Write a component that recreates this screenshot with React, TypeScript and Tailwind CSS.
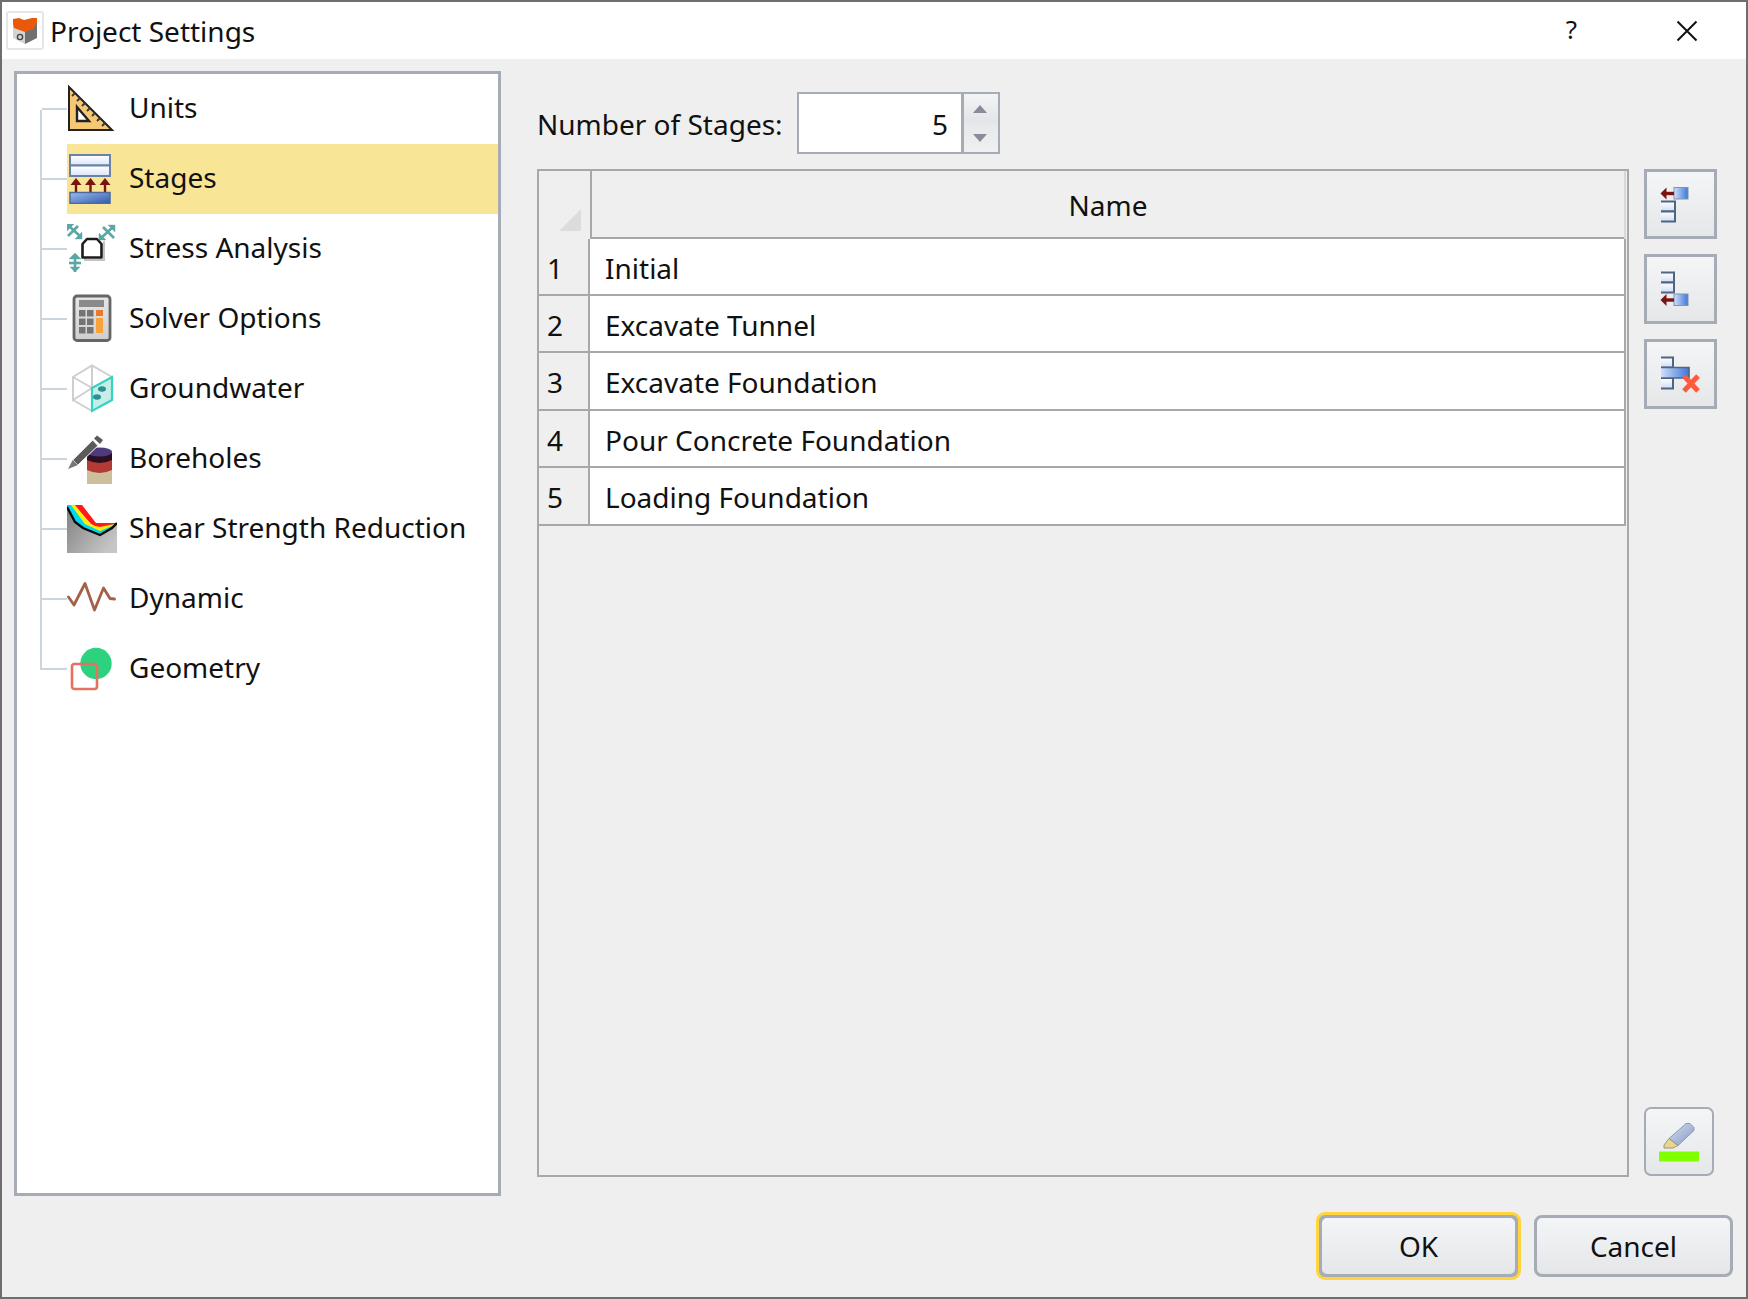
import React from 'react';

const rowClass = 'relative flex items-center';

// Tree icons: every one is drawn in a 50x50 box
function UnitsIcon() {
  const ticks = [9, 14, 19, 24, 29, 34, 39];
  return (
    <svg width="50" height="50" viewBox="0 0 50 50">
      <path d="M2 3 L45 46 H2 Z" fill="#f6c873" stroke="#222" strokeWidth="2" strokeLinejoin="miter" />
      <path d="M10 23 L22 37 H10 Z" fill="#fff" stroke="#222" strokeWidth="2.4" />
      {ticks.map((t) => (
        <line key={t} x1={t - 1} y1={t} x2={t - 4} y2={t + 3} stroke="#3a3a3a" strokeWidth="2" />
      ))}
    </svg>
  );
}

function StagesIcon() {
  return (
    <svg width="50" height="50" viewBox="0 0 50 50">
      <defs>
        <linearGradient id="stageRow" x1="0" y1="0" x2="0" y2="1">
          <stop offset="0" stopColor="#ffffff" />
          <stop offset="1" stopColor="#dbe5f8" />
        </linearGradient>
        <linearGradient id="stageBar" x1="0" y1="0" x2="1" y2="1">
          <stop offset="0" stopColor="#9dbcf0" />
          <stop offset="1" stopColor="#3059aa" />
        </linearGradient>
      </defs>
      <rect x="3" y="1" width="40" height="10.5" fill="url(#stageRow)" stroke="#6a83a5" strokeWidth="2" />
      <rect x="3" y="11.5" width="40" height="10.5" fill="url(#stageRow)" stroke="#6a83a5" strokeWidth="2" />
      {[9, 23.5, 38].map((x) => (
        <g key={x}>
          <line x1={x} y1="29" x2={x} y2="38" stroke="#7a1414" strokeWidth="2.4" />
          <path d={`M${x - 5.5} 31 L${x} 24 L${x + 5.5} 31 Z`} fill="#7a1414" />
        </g>
      ))}
      <rect x="3" y="38.5" width="40" height="11" fill="url(#stageBar)" stroke="#4b6a9c" strokeWidth="1.5" />
    </svg>
  );
}

function StressIcon() {
  const teal = '#5aa8a4';
  return (
    <svg width="50" height="50" viewBox="0 0 50 50">
      <path d="M18 17 V36 H37 V17" fill="none" stroke="#c4c4c4" strokeWidth="2" />
      <path d="M15.5 20 L20 15 H30 L34.5 20 V33.5 H15.5 Z" fill="#fff" stroke="#1c1c1c" strokeWidth="2.6" strokeLinejoin="round" />
      <g stroke={teal} strokeWidth="2.6" fill={teal}>
        <line x1="2" y1="2" x2="14" y2="13" />
        <line x1="1" y1="12" x2="11" y2="2" />
        <path d="M0 0 H7 L0 7 Z" strokeWidth="0.4" />
        <path d="M15 15 H8 L15 8 Z" strokeWidth="0.4" />
        <line x1="33" y1="15" x2="46" y2="3" />
        <line x1="36" y1="3" x2="47" y2="14" />
        <path d="M48 1 V8 L41 1 Z" strokeWidth="0.4" />
        <path d="M32 16 V9 L39 16 Z" strokeWidth="0.4" />
        <line x1="8" y1="30" x2="8" y2="48" />
        <line x1="2" y1="39" x2="14" y2="39" />
        <path d="M2 35 L8 29 L14 35 Z" strokeWidth="0.4" />
        <path d="M3 43 H13 L8 48 Z" strokeWidth="0.4" />
      </g>
    </svg>
  );
}

function SolverIcon() {
  const rows = [16, 24.5, 33];
  return (
    <svg width="50" height="50" viewBox="0 0 50 50">
      <defs>
        <linearGradient id="calcBody" x1="0" y1="0" x2="0" y2="1">
          <stop offset="0" stopColor="#e6e6e6" />
          <stop offset="1" stopColor="#cfcfcf" />
        </linearGradient>
      </defs>
      <rect x="7" y="2" width="36" height="44.5" rx="3" fill="url(#calcBody)" stroke="#666" strokeWidth="2.8" />
      <rect x="12" y="6" width="25" height="7" fill="#8a8a8a" />
      {rows.map((y) => (
        <g key={y} fill="#747474">
          <rect x="12" y={y} width="6.5" height="6.5" />
          <rect x="20" y={y} width="6.5" height="6.5" />
        </g>
      ))}
      <rect x="29" y="16" width="7" height="6" fill="#e9792c" />
      <rect x="29" y="24" width="7" height="15" fill="#f7a23a" />
    </svg>
  );
}

function GroundwaterIcon() {
  return (
    <svg width="50" height="50" viewBox="0 0 50 50">
      <g fill="none" stroke="#cfcfcf" strokeWidth="2">
        <path d="M25 24 L6 36 V13 L25 1.5 L45 13" />
        <path d="M6 13 L25 24 M25 1.5 V24 M6 36 L25 47" />
      </g>
      <path d="M25 24 L45 13 V36 L25 47 Z" fill="#c6eee8" stroke="#35d3c2" strokeWidth="2.2" />
      <ellipse cx="35" cy="25" rx="4" ry="2.8" fill="#2f8f93" />
      <ellipse cx="30" cy="33" rx="4" ry="2.8" fill="#2f8f93" />
    </svg>
  );
}

function BoreholesIcon() {
  return (
    <svg width="50" height="50" viewBox="0 0 50 50">
      <path d="M20 36 H45 V50 H20 Z" fill="#cdbf9c" />
      <path d="M20 25 H45 V36 Q32.5 42 20 36 Z" fill="#b43a35" />
      <path d="M20 19 H45 V26 Q32.5 32 20 26 Z" fill="#2c1020" />
      <ellipse cx="32.5" cy="18" rx="12.5" ry="4.5" fill="#4d3b7c" />
      <path d="M5.7 26 L25.7 6 L31 11.7 L11 31 Z" fill="#5b5b5b" stroke="#fff" strokeWidth="1" />
      <path d="M5.7 26 L11 31 L1 35 Z" fill="#777" />
      <path d="M27 4.5 L30 1.5 L36 6 L33 10 Z" fill="#5b5b5b" />
    </svg>
  );
}

function ShearIcon() {
  return (
    <svg width="50" height="50" viewBox="0 0 50 50">
      <defs>
        <linearGradient id="shearRock" x1="0" y1="0" x2="1" y2="0.7">
          <stop offset="0" stopColor="#7f7f7f" />
          <stop offset="1" stopColor="#c6c6c6" />
        </linearGradient>
      </defs>
      <path d="M0 3 L8 18 L16 24 L33 31 L45 24 L50 19 V49 H0 Z" fill="url(#shearRock)" />
      <path d="M7 1 H15 L29 19 H50 L45 24 L33 25 L24 20 Z" fill="#ff1a1a" />
      <path d="M3 1 H8 L24 21 L33 23 L50 19.5 L45 25 L33 28 L18 20 Z" fill="#ffee00" />
      <path d="M0 1 H4 L18 20 L33 27 L47 21 L45 24 L33 31 L16 24 L8 18 L0 3 Z" fill="#00d8ee" />
      <path d="M0 3 L8 18 L16 24 L33 31 L45 24 L50 19" fill="none" stroke="#0a0a0a" strokeWidth="2.4" />
    </svg>
  );
}

function DynamicIcon() {
  return (
    <svg width="50" height="50" viewBox="0 0 50 50">
      <path d="M1.5 23 L7 31 L18 9.5 L27.5 36 L36.5 14 L43 24.5 L47.5 25" fill="none" stroke="#a5604a" strokeWidth="2.8" strokeLinejoin="round" strokeLinecap="round" />
    </svg>
  );
}

function GeometryIcon() {
  return (
    <svg width="50" height="50" viewBox="0 0 50 50">
      <circle cx="29" cy="19.5" r="15.7" fill="#2dd27e" />
      <rect x="5" y="20" width="25" height="25" rx="2.5" fill="none" stroke="#e8705f" strokeWidth="2.6" />
    </svg>
  );
}

const treeItems = [
  { label: 'Units', icon: <UnitsIcon /> },
  { label: 'Stages', icon: <StagesIcon />, selected: true },
  { label: 'Stress Analysis', icon: <StressIcon /> },
  { label: 'Solver Options', icon: <SolverIcon /> },
  { label: 'Groundwater', icon: <GroundwaterIcon /> },
  { label: 'Boreholes', icon: <BoreholesIcon /> },
  { label: 'Shear Strength Reduction', icon: <ShearIcon /> },
  { label: 'Dynamic', icon: <DynamicIcon /> },
  { label: 'Geometry', icon: <GeometryIcon /> },
];

const stages = ['Initial', 'Excavate Tunnel', 'Excavate Foundation', 'Pour Concrete Foundation', 'Loading Foundation'];

// one table row of the small toolbar icons: dark on top, bottom and right, open on the left
function TableCell({ x, y, w, h, id }: { x: number; y: number; w: number; h: number; id: string }) {
  return (
    <g>
      <rect x={x} y={y} width={w} height={h} fill={`url(#${id})`} />
      <path d={`M${x} ${y} H${x + w} V${y + h} H${x}`} fill="none" stroke="#4f6683" strokeWidth="2" />
    </g>
  );
}

function Defs({ prefix }: { prefix: string }) {
  return (
    <defs>
      <linearGradient id={`${prefix}w`} x1="0" y1="0" x2="0" y2="1">
        <stop offset="0" stopColor="#ffffff" />
        <stop offset="1" stopColor="#d0ddf6" />
      </linearGradient>
      <linearGradient id={`${prefix}b`} x1="0" y1="0" x2="1" y2="0">
        <stop offset="0" stopColor="#cfe0fb" />
        <stop offset="1" stopColor="#3f76d6" />
      </linearGradient>
    </defs>
  );
}

function InsertBeforeIcon() {
  return (
    <svg width="44" height="44" viewBox="0 0 44 44">
      <Defs prefix="ins" />
      <rect x="15" y="5.5" width="14" height="11.5" fill="url(#insb)" stroke="#8094ad" strokeWidth="1" />
      <line x1="6" y1="11.5" x2="15" y2="11.5" stroke="#7a1414" strokeWidth="3.4" />
      <path d="M1.5 11.5 L7.5 5.5 V17.5 Z" fill="#7a1414" />
      <TableCell x={2} y={19.5} w={14} h={10} id="insw" />
      <TableCell x={2} y={29.5} w={14} h={10} id="insw" />
    </svg>
  );
}

function InsertAfterIcon() {
  return (
    <svg width="44" height="44" viewBox="0 0 44 44">
      <Defs prefix="add" />
      <TableCell x={2} y={5.5} w={13} h={10} id="addw" />
      <TableCell x={2} y={15.5} w={13} h={10} id="addw" />
      <rect x="15" y="27" width="14" height="11.5" fill="url(#addb)" stroke="#8094ad" strokeWidth="1" />
      <line x1="6" y1="33" x2="15" y2="33" stroke="#7a1414" strokeWidth="3.4" />
      <path d="M1.5 33 L7.5 27 V39 Z" fill="#7a1414" />
    </svg>
  );
}

function DeleteIcon() {
  return (
    <svg width="44" height="44" viewBox="0 0 44 44">
      <Defs prefix="del" />
      <TableCell x={2} y={5.5} w={12} h={10} id="delw" />
      <TableCell x={2} y={26} w={12} h={10.5} id="delw" />
      <rect x="2" y="15.5" width="28" height="10.5" fill="url(#delb)" />
      <path d="M2 15.5 H30 V26 H2" fill="none" stroke="#4f6683" strokeWidth="1.6" />
      <path d="M25 24 L39 39 M39 24 L25 39" stroke="#ff5a3c" strokeWidth="5" />
    </svg>
  );
}

function MarkerIcon() {
  return (
    <svg width="44" height="44" viewBox="0 0 44 44">
      <defs>
        <linearGradient id="markerBody" x1="0" y1="0" x2="1" y2="1">
          <stop offset="0" stopColor="#d4deee" />
          <stop offset="1" stopColor="#8499c6" />
        </linearGradient>
      </defs>
      <path d="M29 3.5 L33 3.5 L37 7.5 V10.5 L21 25.5 L12 18.5 Z" fill="url(#markerBody)" stroke="#7c8aa6" strokeWidth="0.8" />
      <path d="M12 18.5 L21 25.5 L16 28 H7 V25 Z" fill="#e6d690" stroke="#8a8368" strokeWidth="0.8" />
      <rect x="2" y="31.5" width="40" height="10" fill="#7fff00" />
    </svg>
  );
}

function SideButton({ children }: { children: React.ReactNode }) {
  return (
    <button className="flex h-[70px] w-[73px] items-center justify-center border-[3px] border-[#a5acb5] bg-linear-to-b from-[#f4f5f7] to-[#e5e7e9]">
      {children}
    </button>
  );
}

export default function App() {
  return (
    <div className="flex h-[1299px] w-[1748px] flex-col border-2 border-[#6e6e6e] bg-[#efefef] font-['Noto_Sans',sans-serif] text-[28px] text-[#111]">
      {/* title bar */}
      <div className="flex h-[57px] shrink-0 items-center bg-white">
        <div className="ml-[4px] flex h-[39px] w-[38px] items-center justify-center rounded-[3px] border-2 border-[#e6e6e6]">
          <svg width="26" height="28" viewBox="0 0 26 28">
            <path d="M1 5 L13 10 V27 L1 21 Z" fill="#d4d4d4" />
            <path d="M13 10 L25 5 V21 L13 27 Z" fill="#707070" />
            <path d="M1 2 L7 1 L12 3 L20 1 L25 1 V6 L21 12 L13 15 L2 11 L1 7 Z" fill="#e8590c" />
            <circle cx="8" cy="20" r="2.6" fill="none" stroke="#444" strokeWidth="1.4" />
          </svg>
        </div>
        <span className="ml-[6px]">Project Settings</span>
        <span className="mb-[2px] ml-auto mr-[99px] text-[26px]">?</span>
        <svg width="22" height="22" viewBox="0 0 22 22" className="mr-[48px]">
          <path d="M1.5 1.5 L20.5 20.5 M20.5 1.5 L1.5 20.5" stroke="#111" strokeWidth="2" />
        </svg>
      </div>

      <div className="flex min-h-0 flex-1 flex-col px-[12px] pt-[12px]">
        <div className="flex h-[1125px] gap-[36px]">
          {/* settings tree */}
          <div className="h-full w-[487px] shrink-0 border-[3px] border-[#a5acb5] bg-white">
            {treeItems.map((item, i) => (
              <div key={item.label} className={`${rowClass} h-[70px]`}>
                <div className="ml-[23px] w-[27px] shrink-0">
                  <div className={`h-[36px] border-b-2 border-[#ccd4dc] ${i === 0 ? 'ml-[2px]' : 'border-l-2'}`} />
                  <div className={`h-[34px] border-[#ccd4dc] ${i === treeItems.length - 1 ? '' : 'border-l-2'}`} />
                </div>
                <div className={`flex h-full flex-1 items-center ${item.selected ? 'bg-[#f8e596]' : ''}`}>
                  <div className="w-[50px] shrink-0">{item.icon}</div>
                  <span className="ml-[12px] pb-[4px] whitespace-nowrap">{item.label}</span>
                </div>
              </div>
            ))}
          </div>

          {/* stages */}
          <div className="flex min-w-0 flex-1 flex-col pt-[21px]">
            <div className="flex h-[62px] items-center">
              <span className="pt-[1px] whitespace-nowrap">Number of Stages:</span>
              <div className="ml-auto mr-[734px] flex h-[62px] w-[203px] border-2 border-[#a5acb5]">
                <div className="flex flex-1 items-center justify-end bg-white pt-[1px] pr-[13px]">5</div>
                <div className="flex w-[37px] flex-col border-l-[3px] border-[#a5acb5]">
                  <div className="flex flex-1 items-center justify-center bg-linear-to-b from-[#f3f4f6] to-[#e2e4e7] pr-[2px]">
                    <svg width="14" height="8" viewBox="0 0 14 8">
                      <path d="M0 8 L7 0 L14 8 Z" fill="#8a8a98" />
                    </svg>
                  </div>
                  <div className="flex flex-1 items-center justify-center bg-linear-to-b from-[#e6e8ea] to-[#eef0f2] pr-[2px]">
                    <svg width="14" height="8" viewBox="0 0 14 8">
                      <path d="M0 0 H14 L7 8 Z" fill="#8a8a98" />
                    </svg>
                  </div>
                </div>
              </div>
            </div>

            <div className="mt-[15px] flex h-[1008px] gap-[15px]">
              <div className="h-full w-[1092px] shrink-0 border-2 border-[#a8a8a8]">
                <div className="flex h-[68px] w-[1087px] border-r-2 border-[#d8d8d8]">
                  <div className="flex w-[53px] shrink-0 items-end border-r-2 border-[#a8a8a8] pb-[8px] pl-[20px]">
                    <svg width="22" height="22" viewBox="0 0 22 22">
                      <path d="M22 0 V22 H0 Z" fill="#dcdcdc" />
                    </svg>
                  </div>
                  <div className="flex flex-1 items-center justify-center border-b-2 border-[#a8a8a8] pt-[2px]">Name</div>
                </div>
                {stages.map((name, i) => (
                  <div key={name} className={`flex w-[1087px] border-r-2 border-b-2 border-[#a8a8a8] ${i === 0 ? 'h-[56.5px]' : 'h-[57.5px]'}`}>
                    <div className="flex w-[51px] shrink-0 items-center border-r-2 border-[#a8a8a8] pt-[3px] pl-[8px]">{i + 1}</div>
                    <div className="flex flex-1 items-center bg-white pt-[3px] pl-[15px] whitespace-nowrap">{name}</div>
                  </div>
                ))}
              </div>

              <div className="flex flex-1 flex-col gap-[15px] pb-[1px]">
                <SideButton>
                  <InsertBeforeIcon />
                </SideButton>
                <SideButton>
                  <InsertAfterIcon />
                </SideButton>
                <SideButton>
                  <DeleteIcon />
                </SideButton>
                <button className="mt-auto flex h-[69px] w-[70px] items-center justify-center rounded-[7px] border-2 border-[#a5acb5] bg-linear-to-b from-[#f4f5f7] to-[#e5e7e9]">
                  <MarkerIcon />
                </button>
              </div>
            </div>
          </div>
        </div>

        {/* dialog buttons */}
        <div className="mt-[16px] flex items-center justify-end gap-[13px] pr-[1px]">
          <button className="flex h-[68px] w-[205px] items-center justify-center rounded-[9px] border-[3px] border-[#ffd43c] bg-[#a5acb5] p-[3px]">
            <span className="flex h-full w-full items-center justify-center rounded-[5px] bg-linear-to-b from-[#f4f5f7] to-[#e4e6e9]">OK</span>
          </button>
          <button className="flex h-[62px] w-[199px] items-center justify-center rounded-[8px] border-[3px] border-[#a5acb5] bg-linear-to-b from-[#f4f5f7] to-[#e4e6e9]">
            Cancel
          </button>
        </div>
      </div>
    </div>
  );
}
